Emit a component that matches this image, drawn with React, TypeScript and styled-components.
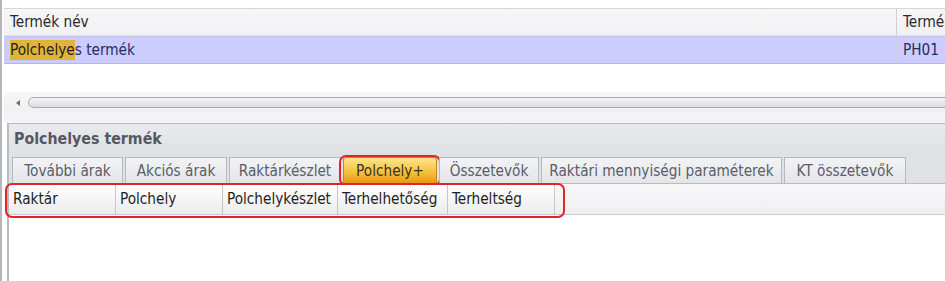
import styled, { createGlobalStyle, css } from 'styled-components';

const GlobalStyle = createGlobalStyle`
  html, body {
    margin: 0;
    padding: 0;
    background: #ffffff;
  }
  body {
    font-family: 'DejaVu Sans Condensed', 'DejaVu Sans', Tahoma, sans-serif;
    font-size: 15.2px;
  }
`;

const Page = styled.div`
  width: 945px;
  height: 281px;
  overflow: hidden;
  display: flex;
  flex-direction: column;
  border-left: 2px solid #b4b6bb;
  box-sizing: border-box;
  background: #ffffff;
`;

const TopGrid = styled.div`
  display: flex;
  flex-direction: column;
  padding-top: 8px;
  padding-left: 2px;
`;

const GridRow = styled.div<{ $selected?: boolean }>`
  display: flex;
  height: 28px;
  align-items: stretch;
  box-sizing: border-box;
  ${({ $selected }) =>
    $selected
      ? css`
          background: #ccccff;
          border-top: 1px solid #c2c2ee;
          border-bottom: 1px solid #b6b6e2;
          color: #262a66;
        `
      : css`
          background: linear-gradient(#f7f7f8, #f1f1f3);
          border-top: 1px solid #d6d6da;
          border-bottom: 1px solid #e2e2e6;
          color: #2a2a2e;
        `}
`;

const GridCell = styled.div<{ $width?: number; $last?: boolean }>`
  display: flex;
  align-items: center;
  padding-left: 6px;
  box-sizing: border-box;
  white-space: nowrap;
  overflow: hidden;
  ${({ $width }) => ($width ? `width: ${$width}px; flex: none;` : 'flex: 1;')}
  ${({ $last }) => ($last ? '' : 'border-right: 1px solid #d0d0dc;')}
`;

const Highlight = styled.span`
  background: #e2b339;
  color: #1e1e1e;
  padding: 1px 0;
`;

const EmptyArea = styled.div`
  height: 28px;
  background: #ffffff;
`;

const ScrollBar = styled.div`
  height: 21px;
  display: flex;
  align-items: center;
  gap: 8px;
  padding-left: 12px;
  background: linear-gradient(#f6f6f7, #f0f0f2);
`;

const Arrow = styled.div`
  width: 0;
  height: 0;
  border-top: 3px solid transparent;
  border-bottom: 3px solid transparent;
  border-right: 4px solid #6a6d74;
  flex: none;
`;

const Thumb = styled.div`
  flex: 1;
  height: 9px;
  margin-right: -20px;
  border: 1px solid #a8aab0;
  border-radius: 6px;
  background: linear-gradient(#f4f4f6, #dcdde1);
`;

const Spacer = styled.div`
  height: 10px;
  background: #f4f4f6;
`;

const Panel = styled.div`
  flex: 1;
  display: flex;
  flex-direction: column;
  margin-left: 5px;
  border-left: 2px solid #b9bbc0;
  border-top: 1px solid #b9bbc0;
  background: #ffffff;
`;

const TitleBar = styled.div`
  height: 29px;
  display: flex;
  align-items: center;
  padding-left: 5px;
  font-weight: bold;
  font-size: 15.8px;
  color: #545861;
  background: linear-gradient(#e9eaed, #dfe1e5);
`;

const TabStrip = styled.div`
  display: flex;
  align-items: flex-end;
  height: 30px;
  padding-left: 3px;
  background: #dfe1e5;
  border-bottom: 1px solid #b9bcc2;
`;

const Tab = styled.div<{ $width: number; $active?: boolean }>`
  position: relative;
  width: ${({ $width }) => $width}px;
  height: 26px;
  margin-right: 2px;
  display: flex;
  align-items: center;
  justify-content: center;
  box-sizing: border-box;
  white-space: nowrap;
  border: 1px solid #b5b8bf;
  border-bottom: none;
  ${({ $active }) =>
    $active
      ? css`
          background: linear-gradient(#fce58f, #f7c13d 55%, #e89a12);
          color: #3b321f;
          border-color: #c08a20;
          border-radius: 3px 3px 0 0;
        `
      : css`
          background: linear-gradient(#f2f3f5, #e3e5e9);
          color: #5a5e68;
        `}
`;

const TabMark = styled.div`
  position: absolute;
  left: -5px;
  right: -5px;
  top: -3px;
  bottom: -3px;
  border: 2px solid #e0242a;
  border-radius: 7px;
  pointer-events: none;
`;

const ColumnHeader = styled.div`
  position: relative;
  display: flex;
  height: 30px;
  background: linear-gradient(#f8f8f9, #eeeff1);
  border-bottom: 1px solid #c9cace;
`;

const HeaderCell = styled.div<{ $width: number }>`
  width: ${({ $width }) => $width}px;
  flex: none;
  display: flex;
  align-items: center;
  padding-left: 4px;
  box-sizing: border-box;
  border-right: 1px solid #c6c7cc;
  color: #1f1f22;
  white-space: nowrap;
  overflow: hidden;
  background: linear-gradient(#ffffff, #ececee);
`;

const HeaderMark = styled.div`
  position: absolute;
  left: -4px;
  top: -1px;
  width: 556px;
  height: 31px;
  border: 2px solid #e0242a;
  border-radius: 7px;
  pointer-events: none;
`;

const tabs = [
  { label: 'További árak', width: 111 },
  { label: 'Akciós árak', width: 102 },
  { label: 'Raktárkészlet', width: 112 },
  { label: 'Polchely+', width: 94, active: true },
  { label: 'Összetevők', width: 100 },
  { label: 'Raktári mennyiségi paraméterek', width: 241 },
  { label: 'KT összetevők', width: 122 },
];

const columns = [
  { label: 'Raktár', width: 107 },
  { label: 'Polchely', width: 107 },
  { label: 'Polchelykészlet', width: 115 },
  { label: 'Terhelhetőség', width: 110 },
  { label: 'Terheltség', width: 107 },
];

const App = () => {
  return (
    <>
      <GlobalStyle />
      <Page>
        <TopGrid>
          <GridRow>
            <GridCell $width={893}>Termék név</GridCell>
            <GridCell $last>Termék</GridCell>
          </GridRow>
          <GridRow $selected>
            <GridCell $width={893}>
              <span>
                <Highlight>Polchelye</Highlight>s termék
              </span>
            </GridCell>
            <GridCell $last>PH01</GridCell>
          </GridRow>
          <EmptyArea />
          <ScrollBar>
            <Arrow />
            <Thumb />
          </ScrollBar>
          <Spacer />
        </TopGrid>
        <Panel>
          <TitleBar>Polchelyes termék</TitleBar>
          <TabStrip>
            {tabs.map((t) => (
              <Tab key={t.label} $width={t.width} $active={t.active}>
                {t.label}
                {t.active && <TabMark />}
              </Tab>
            ))}
          </TabStrip>
          <ColumnHeader>
            {columns.map((c) => (
              <HeaderCell key={c.label} $width={c.width}>
                {c.label}
              </HeaderCell>
            ))}
            <HeaderMark />
          </ColumnHeader>
        </Panel>
      </Page>
    </>
  );
};

export default App;
